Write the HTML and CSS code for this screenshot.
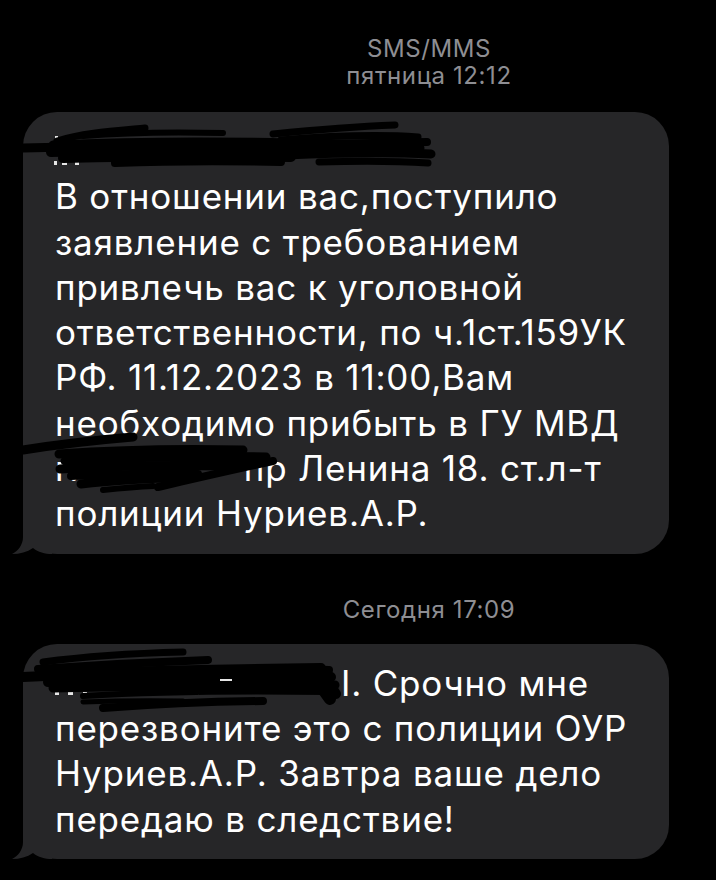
FILE: index.html
```html
<!DOCTYPE html>
<html lang="ru">
<head>
<meta charset="utf-8">
<title>SMS/MMS</title>
<link rel="stylesheet" href="styles.css">
</head>
<body>
<div class="screen">
  <div class="stamp stamp-top">
    <div>SMS/MMS</div>
    <div>пятница 12:12</div>
  </div>

  <div class="bubble bubble-one">
    <div class="msg">
      <span class="line">&nbsp;</span>
      <span class="line">В отношении вас,поступило</span>
      <span class="line">заявление с требованием</span>
      <span class="line">привлечь вас к уголовной</span>
      <span class="line">ответственности, по ч.1ст.159УК</span>
      <span class="line">РФ. 11.12.2023 в 11:00,Вам</span>
      <span class="line">необходимо прибыть в ГУ МВД</span>
      <span class="line">г.<span class="gap gap-city"></span>пр Ленина 18. ст.л-т</span>
      <span class="line">полиции Нуриев.А.Р.</span>
    </div>
    <svg class="scribble" width="646" height="442" viewBox="0 0 646 442" aria-hidden="true">
      <g fill="#e6e6e6">
        <rect x="31" y="49" width="3" height="4"/>
        <rect x="39" y="50" width="5" height="3"/>
        <rect x="52" y="50" width="4" height="3"/>
        <rect x="175" y="49" width="4" height="4"/>
        <rect x="187" y="50" width="5" height="3"/>
        <rect x="203" y="50" width="4" height="3"/>
        <rect x="217" y="50" width="4" height="3"/>
        <rect x="232" y="50" width="4" height="3"/>
        <rect x="247" y="50" width="6" height="3"/>
        <rect x="32" y="24" width="3" height="4"/>
      </g>
      <g fill="none" stroke="#000" stroke-linecap="round">
        <path d="M0 36 L45 35" stroke-width="9"/>
        <path d="M34 29 C60 21 90 19 122 16" stroke-width="7"/>
        <path d="M60 24 Q120 19 200 21" stroke-width="6"/>
        <path d="M30 33 Q140 28 265 31" stroke-width="9"/>
        <path d="M28 40 Q150 36 272 38" stroke-width="10"/>
        <path d="M40 46 Q150 43 268 45" stroke-width="10"/>
        <path d="M92 51 Q170 48 258 50" stroke-width="8"/>
        <path d="M180 37 Q300 32 397 36" stroke-width="9"/>
        <path d="M250 22 Q320 15 372 13" stroke-width="7"/>
        <path d="M258 28 Q340 21 395 25" stroke-width="7"/>
        <path d="M240 33 L404 30" stroke-width="8"/>
        <path d="M262 43 Q350 39 408 42" stroke-width="9"/>
        <path d="M296 50 Q360 48 405 51" stroke-width="7"/>
        <path d="M0 338 Q50 330 110 325" stroke-width="9"/>
        <path d="M36 342 Q120 336 220 338" stroke-width="9"/>
        <path d="M42 349 Q140 343 243 345" stroke-width="9"/>
        <path d="M37 357 Q110 352 205 354" stroke-width="9"/>
        <path d="M48 364 Q100 361 175 362" stroke-width="8"/>
        <path d="M58 372 Q100 367 165 365" stroke-width="9"/>
        <path d="M80 378 Q110 375 130 374" stroke-width="6"/>
        <path d="M135 375 Q195 361 250 349" stroke-width="8"/>
        <path d="M150 352 Q190 350 230 352" stroke-width="6"/>
      </g>
    </svg>
    <svg class="tail" width="40" height="35" viewBox="0 0 40 35" aria-hidden="true">
      <path d="M11 0 L11 18 C11 26 6 32 0 35 C8 35 15 33 21 29 C26 33 33 35 40 35 L40 0 Z"/>
    </svg>
  </div>

  <div class="stamp stamp-mid">Сегодня 17:09</div>

  <div class="bubble bubble-two">
    <div class="msg">
      <span class="line"><span class="gap gap-name"></span>I. Срочно мне</span>
      <span class="line">перезвоните это с полиции ОУР</span>
      <span class="line">Нуриев.А.Р. Завтра ваше дело</span>
      <span class="line">передаю в следствие!</span>
    </div>
    <svg class="scribble" width="646" height="216" viewBox="0 0 646 216" aria-hidden="true">
      <g fill="#e6e6e6">
        <rect x="32" y="48" width="4" height="3"/>
        <rect x="45" y="48" width="5" height="3"/>
        <rect x="60" y="48" width="4" height="3"/>
        <rect x="140" y="48" width="5" height="3"/>
        <rect x="155" y="48" width="4" height="3"/>
        <rect x="170" y="48" width="6" height="3"/>
        <rect x="270" y="33" width="3" height="5"/>
      </g>
      <g fill="none" stroke="#000" stroke-linecap="round">
        <path d="M20 18 Q80 10 160 8" stroke-width="7"/>
        <path d="M15 25 Q100 19 185 16" stroke-width="8"/>
        <path d="M0 33 Q60 30 110 31" stroke-width="10"/>
        <path d="M20 30 Q150 26 298 24" stroke-width="10"/>
        <path d="M25 38 Q160 34 308 33" stroke-width="10"/>
        <path d="M30 44 Q160 41 312 41" stroke-width="9"/>
        <path d="M60 52 Q160 46 306 48" stroke-width="6"/>
        <path d="M80 64 Q160 58 240 57" stroke-width="8"/>
        <path d="M60 58 Q110 56 160 57" stroke-width="5"/>
        <path d="M200 28 Q260 24 306 26" stroke-width="8"/>
        <path d="M289 30 L307 55" stroke-width="12"/>
        <path d="M299 28 L313 50" stroke-width="10"/>
      </g>
      <g fill="#e6e6e6">
        <rect x="197" y="35" width="12" height="2"/>
      </g>
    </svg>
    <svg class="tail" width="40" height="35" viewBox="0 0 40 35" aria-hidden="true">
      <path d="M11 0 L11 18 C11 26 6 32 0 35 C8 35 15 33 21 29 C26 33 33 35 40 35 L40 0 Z"/>
    </svg>
  </div>
</div>
</body>
</html>
```

FILE: styles.css
```css
html, body {
  margin: 0;
  padding: 0;
  background: #000;
}

body {
  font-family: Inter, Roboto, "Liberation Sans", "Noto Sans", sans-serif;
  -webkit-font-smoothing: antialiased;
}

.screen {
  width: 716px;
  height: 880px;
  overflow: hidden;
  background: #000;
}

.stamp {
  padding-left: 142px;
  text-align: center;
  color: #8e8e93;
  font-size: 24px;
  line-height: 27px;
  letter-spacing: 0.6px;
}

.stamp-top {
  padding-top: 35px;
  margin-bottom: 23px;
}

.stamp-mid {
  margin-top: 42px;
  margin-bottom: 21px;
}

.bubble {
  position: relative;
  margin-left: 23px;
  width: 646px;
  box-sizing: border-box;
  padding: 17px 20px 17px 32px;
  background: #262628;
  border-radius: 34px;
  color: #fff;
  font-size: 35px;
  line-height: 45.3px;
  letter-spacing: 0.8px;
  white-space: nowrap;
}

.msg {
  position: relative;
}

.line {
  display: block;
}

.gap {
  display: inline-block;
}

.gap-city {
  width: 164px;
}

.gap-name {
  width: 286px;
}

.scribble {
  position: absolute;
  left: 0;
  top: 0;
  overflow: visible;
  pointer-events: none;
}

.tail {
  position: absolute;
  left: -11px;
  bottom: 0;
  fill: #262628;
}
```
